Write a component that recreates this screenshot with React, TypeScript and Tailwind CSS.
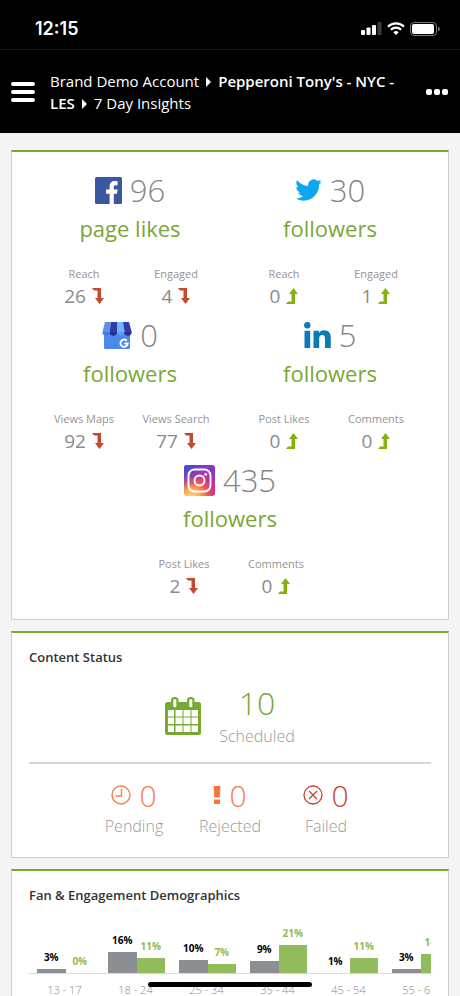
import type { ReactNode } from "react";

type Trend = "up" | "down";

interface Metric {
  label: string;
  value: number;
  trend: Trend;
}

interface Network {
  id: string;
  icon: ReactNode;
  count: number;
  unit: string;
  metrics: Metric[];
}

function FacebookIcon() {
  return (
    <svg viewBox="0 0 27 27" className="size-[27px]" aria-hidden="true">
      <rect width="27" height="27" rx="1.5" fill="#3b579d" />
      <path
        d="M14.6 27V16.8H11v-4.200h3.600V9.500c0-3.600 2.100-5.500 5.200-5.500 1.300 0 2.400.1 2.800.2v4h-2c-1.500 0-1.800.7-1.800 1.800v2.600h3.700l-.5 4.200h-3.200V27z"
        fill="#fff"
      />
    </svg>
  );
}

function TwitterIcon() {
  return (
    <svg viewBox="0 2 24 20" className="h-[22px] w-[27px]" aria-hidden="true">
      <path
        fill="#0ba8ee"
        d="M23.950 4.570a10 10 0 0 1-2.820.780 4.960 4.960 0 0 0 2.160-2.720c-.950.550-2 .950-3.130 1.180a4.920 4.920 0 0 0-8.380 4.480C7.690 8.100 4.070 6.130 1.640 3.160a4.820 4.820 0 0 0-.670 2.480c0 1.710.870 3.210 2.190 4.100a4.900 4.900 0 0 1-2.230-.620v.060a4.920 4.920 0 0 0 3.950 4.830 5 5 0 0 1-2.210.080 4.940 4.940 0 0 0 4.600 3.420A9.870 9.870 0 0 1 0 19.540a14 14 0 0 0 7.550 2.210c9.050 0 14-7.500 14-13.980 0-.210 0-.420-.020-.630a9.940 9.940 0 0 0 2.460-2.550z"
      />
    </svg>
  );
}

function StoreIcon() {
  return (
    <svg viewBox="0 0 30 27" className="h-[27px] w-[30px]" aria-hidden="true">
      <path d="M2 10h26v15.500a1.500 1.500 0 0 1-1.500 1.500h-23A1.500 1.500 0 0 1 2 25.500z" fill="#4a88ee" />
      <path d="M3 0h6L7.500 10h-7z" fill="#5c8ff0" />
      <path d="M9 0h6v10H7.500z" fill="#2f3da8" />
      <path d="M15 0h6l1.500 10H15z" fill="#78b4fb" />
      <path d="M21 0h6l2.700 10h-7.200z" fill="#2f3da8" />
      <path d="M.4 10h7.400a3.700 3.700 0 0 1-7.400 0z" fill="#4678e4" />
      <path d="M7.700 10H15a3.650 3.650 0 0 1-7.300 0z" fill="#27308c" />
      <path d="M15 10h7.300a3.650 3.650 0 0 1-7.300 0z" fill="#5c9af5" />
      <path d="M22.300 10h7.400a3.700 3.700 0 0 1-7.400 0z" fill="#27308c" />
      <path
        d="M24.800 18.600a3.700 3.700 0 1 0 1 2.900h-3.500"
        fill="none"
        stroke="#fff"
        strokeWidth="1.900"
      />
    </svg>
  );
}

function LinkedInIcon() {
  return (
    <svg viewBox="0 0 27 26" className="h-[26px] w-[27px]" aria-hidden="true" fill="#0b7bb6">
      <circle cx="3.300" cy="3.200" r="3.200" />
      <path d="M.5 8.700h5.700V26H.5zM9.500 8.700H15V11c.9-1.600 2.700-2.800 5.200-2.800 5.500 0 6.600 3.600 6.600 8.300V26H21v-8.400c0-2 0-4.600-2.700-4.600s-3.100 2.200-3.100 4.400V26H9.500z" />
    </svg>
  );
}

function InstagramIcon() {
  return (
    <svg viewBox="0 0 31 31" className="size-[31px]" aria-hidden="true">
      <defs>
        <radialGradient id="ig-warm" cx="0.250" cy="1.050" r="1.050">
          <stop offset="0" stopColor="#ffdc80" />
          <stop offset="0.250" stopColor="#fcaf54" />
          <stop offset="0.480" stopColor="#f4604f" />
          <stop offset="0.700" stopColor="#d4308a" />
          <stop offset="1" stopColor="#8a36c4" />
        </radialGradient>
        <radialGradient id="ig-cool" cx="0" cy="0" r="0.750">
          <stop offset="0" stopColor="#3a55d8" />
          <stop offset="0.400" stopColor="#5447d0" stopOpacity="0.800" />
          <stop offset="1" stopColor="#5b47d0" stopOpacity="0" />
        </radialGradient>
      </defs>
      <rect width="31" height="31" rx="3" fill="url(#ig-warm)" />
      <rect width="31" height="31" rx="3" fill="url(#ig-cool)" />
      <rect x="4.500" y="4.500" width="22" height="22" rx="6" fill="none" stroke="#fff" strokeWidth="1.900" />
      <circle cx="15.500" cy="15.500" r="5" fill="none" stroke="#fff" strokeWidth="1.900" />
      <circle cx="21.700" cy="9.400" r="1.400" fill="#fff" />
    </svg>
  );
}

function TrendArrow({ trend }: { trend: Trend }) {
  return trend === "down" ? (
    <svg viewBox="0 0 12 16" className="h-4 w-3" role="img" aria-label="down">
      <path d="M0 0h9v10h3l-4.500 6L3 10h2.500V2.500H2z" fill="#c8472f" />
    </svg>
  ) : (
    <svg viewBox="0 0 12 16" className="h-4 w-3" role="img" aria-label="up">
      <path d="M0 16h9V6h3L7.500 0 3 6h2.500v7.500H2z" fill="#86b00b" />
    </svg>
  );
}

const calendarColumns = [
  { x: 3, width: 6 },
  { x: 10.5, width: 7 },
  { x: 18.5, width: 7 },
  { x: 26.5, width: 6.5 },
];

function CalendarIcon() {
  return (
    <svg viewBox="0 0 36 38" className="h-[38px] w-9" aria-hidden="true">
      <rect y="5" width="36" height="33" rx="2.500" fill="#76a92f" />
      <rect x="6" width="7.500" height="12" rx="3.500" fill="#76a92f" />
      <rect x="22" width="7.500" height="12" rx="3.500" fill="#76a92f" />
      <rect x="8.300" y="2.200" width="3" height="8" rx="1" fill="#fff" />
      <rect x="24.300" y="2.200" width="3" height="8" rx="1" fill="#fff" />
      {[13, 20.500, 28.500].map((y) =>
        calendarColumns.map((column) => (
          <rect key={`${column.x}-${y}`} x={column.x} y={y} width={column.width} height="6.500" fill="#fff" />
        )),
      )}
    </svg>
  );
}

function ClockIcon() {
  return (
    <svg viewBox="0 0 20 20" className="size-5" aria-hidden="true" fill="none" stroke="#f5814d" strokeWidth="1.400">
      <circle cx="10" cy="10" r="9" />
      <path d="M10.500 4v7H5" />
    </svg>
  );
}

function ExclamationIcon() {
  return (
    <svg viewBox="0 0 8 18" className="h-[18px] w-2" aria-hidden="true" fill="#f9743d">
      <path d="M.5 0h7L6.700 11.500H1.300zM1 13.500h6V18H1z" />
    </svg>
  );
}

function FailedIcon() {
  return (
    <svg viewBox="0 0 20 20" className="size-5" aria-hidden="true" fill="none" stroke="#c4452f" strokeWidth="1.300">
      <circle cx="10" cy="10" r="9" />
      <path d="M6 6l8 8M14 6l-8 8" />
    </svg>
  );
}

function Caret() {
  return (
    <svg viewBox="0 0 5 10" className="mx-[7px] inline-block h-2.5 w-[5px] align-baseline" aria-hidden="true">
      <path d="M0 0l5 5-5 5z" fill="#fff" />
    </svg>
  );
}

const networks: Network[] = [
  {
    id: "facebook",
    icon: <FacebookIcon />,
    count: 96,
    unit: "page likes",
    metrics: [
      { label: "Reach", value: 26, trend: "down" },
      { label: "Engaged", value: 4, trend: "down" },
    ],
  },
  {
    id: "twitter",
    icon: <TwitterIcon />,
    count: 30,
    unit: "followers",
    metrics: [
      { label: "Reach", value: 0, trend: "up" },
      { label: "Engaged", value: 1, trend: "up" },
    ],
  },
  {
    id: "google",
    icon: <StoreIcon />,
    count: 0,
    unit: "followers",
    metrics: [
      { label: "Views Maps", value: 92, trend: "down" },
      { label: "Views Search", value: 77, trend: "down" },
    ],
  },
  {
    id: "linkedin",
    icon: <LinkedInIcon />,
    count: 5,
    unit: "followers",
    metrics: [
      { label: "Post Likes", value: 0, trend: "up" },
      { label: "Comments", value: 0, trend: "up" },
    ],
  },
  {
    id: "instagram",
    icon: <InstagramIcon />,
    count: 435,
    unit: "followers",
    metrics: [
      { label: "Post Likes", value: 2, trend: "down" },
      { label: "Comments", value: 0, trend: "up" },
    ],
  },
];

const statuses = [
  { label: "Pending", value: 0, color: "text-[#f5814d]", icon: <ClockIcon /> },
  { label: "Rejected", value: 0, color: "text-[#f5814d]", icon: <ExclamationIcon /> },
  { label: "Failed", value: 0, color: "text-[#c4452f]", icon: <FailedIcon /> },
];

const demographics = [
  { range: "13 - 17", fans: 3, engaged: 0 },
  { range: "18 - 24", fans: 16, engaged: 11 },
  { range: "25 - 34", fans: 10, engaged: 7 },
  { range: "35 - 44", fans: 9, engaged: 21 },
  { range: "45 - 54", fans: 1, engaged: 11 },
  { range: "55 - 64", fans: 3, engaged: 14 },
];

const barHeight = (percent: number) => (percent > 1 ? Math.round((percent * 4) / 3) : 0);

function Card({ children, className = "" }: { children: ReactNode; className?: string }) {
  return (
    <section className={`border border-t-2 border-[#cfcfcf] border-t-[#79a733] bg-white ${className}`}>
      {children}
    </section>
  );
}

function NetworkTile({ network }: { network: Network }) {
  return (
    <article className="w-1/2 px-2">
      <div className="flex h-10 items-center justify-center gap-2 text-[31px] font-light text-[#858585]">
        {network.icon}
        <span>{network.count}</span>
      </div>
      <h3 className="h-9 text-center text-[22px] leading-9 text-[#79a733]">{network.unit}</h3>
      <dl className="mt-[18px] grid grid-cols-2 text-center">
        {network.metrics.map((metric) => (
          <div key={metric.label}>
            <dt className="text-[11px] leading-5 whitespace-nowrap text-[#949494]">{metric.label}</dt>
            <dd className="flex h-6 items-center justify-center gap-1.5 text-[19px] text-[#8a8a8a]">
              {metric.value}
              <TrendArrow trend={metric.trend} />
            </dd>
          </div>
        ))}
      </dl>
    </article>
  );
}

function Bar({ percent, tone }: { percent: number; tone: "fans" | "engaged" }) {
  return (
    <div className="flex-1">
      <div
        className={`text-center text-[10px] leading-6 font-bold ${tone === "fans" ? "text-black" : "text-[#8fba55]"}`}
      >
        {percent}%
      </div>
      <div
        className={tone === "fans" ? "bg-[#8b8f94]" : "bg-[#91bc5c]"}
        style={{ height: barHeight(percent) }}
      />
    </div>
  );
}

export default function App() {
  return (
    <div className="relative flex h-screen flex-col overflow-hidden bg-[#f4f4f4] font-['Open_Sans',sans-serif]">
      <header className="shrink-0 bg-black text-white">
        <div className="flex h-[50px] items-center justify-between border-b border-[#151515] pt-2 pr-5 pl-[35px]">
          <time className="font-['Inter',sans-serif] text-[18px] font-semibold">12:15</time>
          <div className="flex items-center gap-[5px]">
            <svg viewBox="0 0 21 13" className="h-[13px] w-[21px]" role="img" aria-label="Signal">
              <rect y="8" width="4" height="5" rx="1" fill="#fff" />
              <rect x="5.500" y="5.500" width="4" height="7.500" rx="1" fill="#fff" />
              <rect x="11" y="3" width="4" height="10" rx="1" fill="#fff" />
              <rect x="16.500" width="4" height="13" rx="1" fill="#3c3c3c" />
            </svg>
            <svg viewBox="0 0 18 13" className="h-[13px] w-[18px]" role="img" aria-label="Wi-Fi">
              <path d="M1 4.700a11.500 11.500 0 0 1 16 0" fill="none" stroke="#fff" strokeWidth="2.300" />
              <path d="M3.900 7.700a7.300 7.300 0 0 1 10.200 0" fill="none" stroke="#fff" strokeWidth="2.200" />
              <path d="M9 13l-2.700-2.800a3.900 3.900 0 0 1 5.400 0z" fill="#fff" />
            </svg>
            <svg viewBox="0 0 30 14" className="h-3.5 w-[30px]" role="img" aria-label="Battery">
              <rect x="0.500" y="0.500" width="26" height="13" rx="3.500" fill="none" stroke="#777" />
              <rect x="2" y="2" width="22" height="10" rx="2" fill="#fff" />
              <path d="M28 4.500a2.600 2.600 0 0 1 0 5z" fill="#777" />
            </svg>
          </div>
        </div>
        <div className="flex h-[83px] items-center pr-3 pl-[11px]">
          <button type="button" aria-label="Open menu" className="flex w-6 shrink-0 flex-col gap-1">
            <span className="h-1 rounded-sm bg-white" />
            <span className="h-1 rounded-sm bg-white" />
            <span className="h-1 rounded-sm bg-white" />
          </button>
          <nav aria-label="Breadcrumb" className="ml-[15px] flex-1 pr-3 text-[15px] leading-[22px]">
            <a href="#account">Brand Demo Account</a>
            <Caret />
            <a href="#location" className="font-semibold">
              Pepperoni Tony's - NYC - LES
            </a>
            <Caret />
            <span>7 Day Insights</span>
          </nav>
          <button type="button" aria-label="More options" className="flex shrink-0 gap-0.5">
            <span className="size-1.5 rounded-xs bg-white" />
            <span className="size-1.5 rounded-xs bg-white" />
            <span className="size-1.5 rounded-xs bg-white" />
          </button>
        </div>
      </header>

      <main className="flex min-h-0 flex-1 flex-col gap-[11px] overflow-y-auto px-[11px] pt-[17px] [scrollbar-width:none] [&>*]:shrink-0">
        <Card className="px-[18px] pt-[18px] pb-[21px]">
          <div className="flex flex-wrap justify-center gap-y-[7px]">
            {networks.map((network) => (
              <NetworkTile key={network.id} network={network} />
            ))}
          </div>
        </Card>

        <Card className="px-[17px] pt-3.5 pb-5">
          <h2 className="text-[13px] leading-5 font-semibold text-[#333]">Content Status</h2>
          <div className="mt-4 flex items-center justify-center gap-[18px] pb-[13px]">
            <CalendarIcon />
            <div className="text-center">
              <div className="h-10 text-[32px] leading-10 font-light text-[#79a733]">10</div>
              <div className="text-[16px] leading-[26px] font-light text-[#999]">Scheduled</div>
            </div>
          </div>
          <hr className="border-t-2 border-[#d6d6d6]" />
          <div className="mt-[11px] flex justify-center">
            {statuses.map((status) => (
              <div key={status.label} className="w-24 text-center">
                <div
                  className={`flex h-10 items-center justify-center gap-2 text-[30px] font-light ${status.color}`}
                >
                  {status.icon}
                  <span>{status.value}</span>
                </div>
                <div className="text-[16px] leading-[22px] font-light text-[#999]">{status.label}</div>
              </div>
            ))}
          </div>
        </Card>

        <Card className="px-[17px] pt-3.5 pb-5">
          <h2 className="text-[13px] leading-5 font-semibold text-[#333]">Fan &amp; Engagement Demographics</h2>
          <div className="mt-4 overflow-hidden">
            <div className="flex w-max">
              {demographics.map((group) => (
                <div key={group.range} className="w-[71px]">
                  <div className="flex h-[53px] items-end border-b border-[#d5dade] pr-1.5 pl-2">
                    <Bar percent={group.fans} tone="fans" />
                    <Bar percent={group.engaged} tone="engaged" />
                  </div>
                  <div className="mt-1.5 text-center text-[11px] leading-5 font-light text-[#888]">{group.range}</div>
                </div>
              ))}
            </div>
          </div>
        </Card>
      </main>

      <div className="absolute bottom-[9px] left-1/2 h-[5px] w-[164px] -translate-x-1/2 rounded-full bg-black" />
    </div>
  );
}
